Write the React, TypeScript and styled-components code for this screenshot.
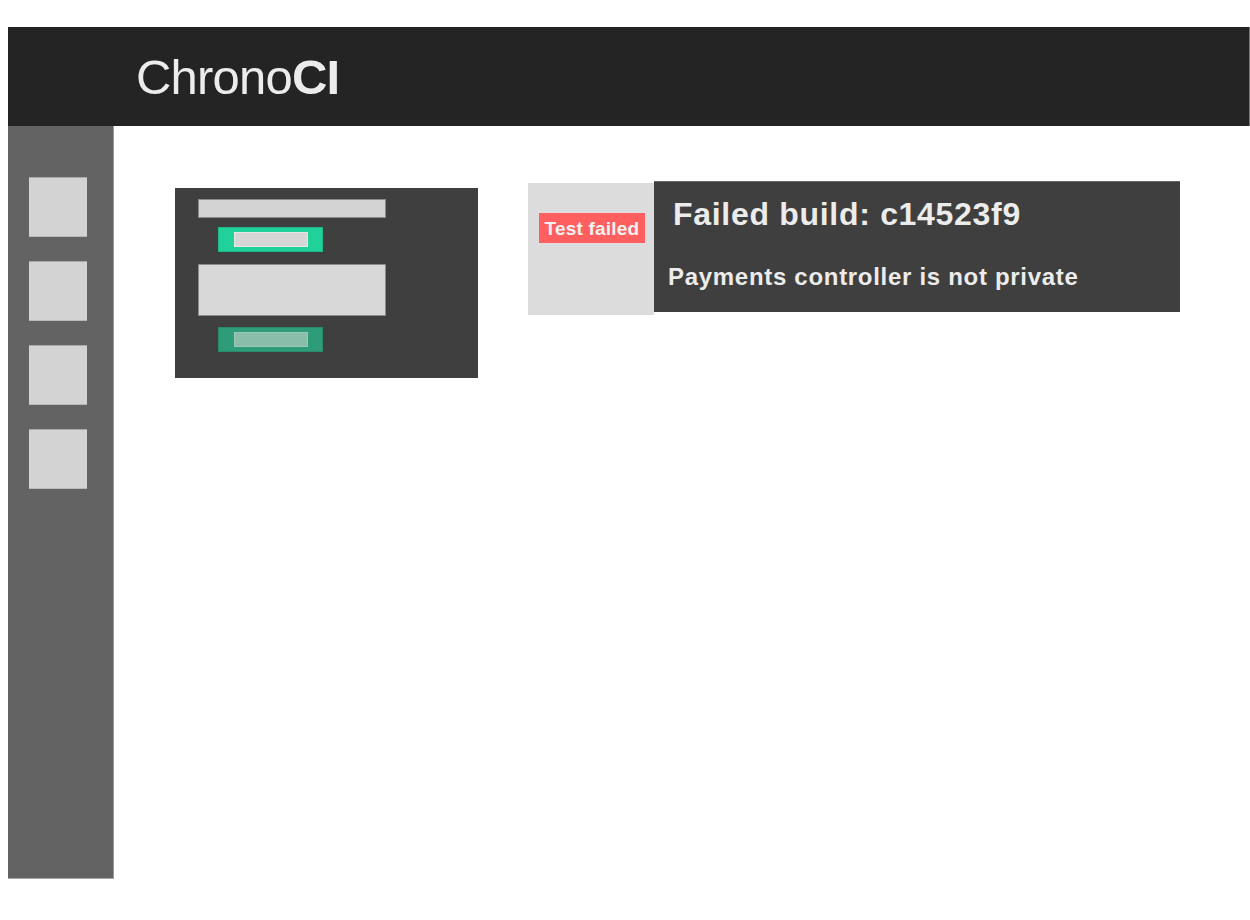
import React from 'react';
import styled, { createGlobalStyle } from 'styled-components';

const GlobalStyle = createGlobalStyle`
  body {
    margin: 0;
    background: #ffffff;
    font-family: 'Liberation Sans', Arial, sans-serif;
  }
`;

const Page = styled.div`
  width: 1242px;
  padding: 27px 0 0 8px;
  display: flex;
  flex-direction: column;
`;

const Header = styled.header`
  height: 99px;
  background: #242424;
  border-right: 1px solid #777;
  display: flex;
  align-items: center;
  padding-left: 128px;
  box-sizing: border-box;
`;

const Logo = styled.h1`
  margin: 0;
  font-size: 49px;
  font-weight: 400;
  color: #ececec;
  letter-spacing: -0.8px;
  b {
    font-weight: 700;
  }
`;

const Body = styled.div`
  display: flex;
  align-items: flex-start;
`;

const Sidebar = styled.nav`
  width: 106px;
  height: 753px;
  background: #636363;
  border-right: 1px solid #999;
  border-bottom: 1px solid #aaa;
  box-sizing: border-box;
  padding: 51px 0 0 21px;
  display: flex;
  flex-direction: column;
  gap: 24px;
`;

const NavSquare = styled.div`
  width: 58px;
  height: 60px;
  background: #d3d3d3;
  border-top: 1px solid #a8a8a8;
  border-bottom: 1px solid #b8b8b8;
  box-sizing: border-box;
`;

const Main = styled.main`
  flex: 1;
  display: flex;
  align-items: flex-start;
  padding: 55px 0 0 61px;
  gap: 50px;
`;

const FormCard = styled.section`
  margin-top: 7px;
  width: 303px;
  height: 190px;
  background: #3f3f3f;
  box-sizing: border-box;
  padding: 11px 0 0 23px;
  display: flex;
  flex-direction: column;
  align-items: flex-start;
`;

const Field = styled.div<{ $tall?: boolean }>`
  width: 188px;
  height: ${(p) => (p.$tall ? 52 : 19)}px;
  background: ${(p) => (p.$tall ? '#d8d8d8' : '#d3d3d3')};
  border: 1px solid #8a8a8a;
  box-sizing: border-box;
  margin-top: ${(p) => (p.$tall ? 12 : 0)}px;
`;

const FormButton = styled.div<{ $muted?: boolean }>`
  width: 105px;
  height: 25px;
  margin: ${(p) => (p.$muted ? 11 : 9)}px 0 0 20px;
  background: ${(p) => (p.$muted ? '#2e9c78' : '#21d19a')};
  border: 1px solid ${(p) => (p.$muted ? '#2a8a6a' : '#1fb888')};
  box-sizing: border-box;
  padding: 4px 0 0 15px;
`;

const ButtonLabel = styled.div<{ $muted?: boolean }>`
  width: 74px;
  height: 15px;
  background: ${(p) => (p.$muted ? '#8bbdab' : '#d6d6d6')};
  border: 1px solid ${(p) => (p.$muted ? '#9cc8b8' : '#e6e6e6')};
  box-sizing: border-box;
`;

const BuildCard = styled.section`
  display: flex;
  align-items: flex-start;
`;

const StatusSide = styled.div`
  margin-top: 2px;
  width: 126px;
  height: 132px;
  background: #dcdcdc;
  box-sizing: border-box;
  padding: 30px 0 0 11px;
`;

const Badge = styled.span`
  display: inline-block;
  width: 106px;
  height: 30px;
  line-height: 32px;
  background: #ff5f5f;
  color: #f2f2f2;
  font-size: 19px;
  font-weight: 700;
  text-align: center;
  letter-spacing: 0.2px;
`;

const Details = styled.div`
  width: 526px;
  height: 131px;
  background: #3f3f3f;
  border-top: 1px solid #666;
  box-sizing: border-box;
  padding: 13px 0 0 14px;
  color: #ececec;
`;

const Title = styled.h2`
  margin: 0 0 0 5px;
  font-size: 32px;
  font-weight: 700;
  line-height: 38px;
  letter-spacing: 0.7px;
`;

const Message = styled.p`
  margin: 30px 0 0 0;
  font-size: 24px;
  font-weight: 700;
  line-height: 28px;
  letter-spacing: 0.7px;
`;

export default function App() {
  return (
    <>
      <GlobalStyle />
      <Page>
        <Header>
          <Logo>
            Chrono<b>CI</b>
          </Logo>
        </Header>
        <Body>
          <Sidebar>
            {[0, 1, 2, 3].map((i) => (
              <NavSquare key={i} />
            ))}
          </Sidebar>
          <Main>
            <FormCard>
              <Field />
              <FormButton>
                <ButtonLabel />
              </FormButton>
              <Field $tall />
              <FormButton $muted>
                <ButtonLabel $muted />
              </FormButton>
            </FormCard>
            <BuildCard>
              <StatusSide>
                <Badge>Test failed</Badge>
              </StatusSide>
              <Details>
                <Title>Failed build: c14523f9</Title>
                <Message>Payments controller is not private</Message>
              </Details>
            </BuildCard>
          </Main>
        </Body>
      </Page>
    </>
  );
}
